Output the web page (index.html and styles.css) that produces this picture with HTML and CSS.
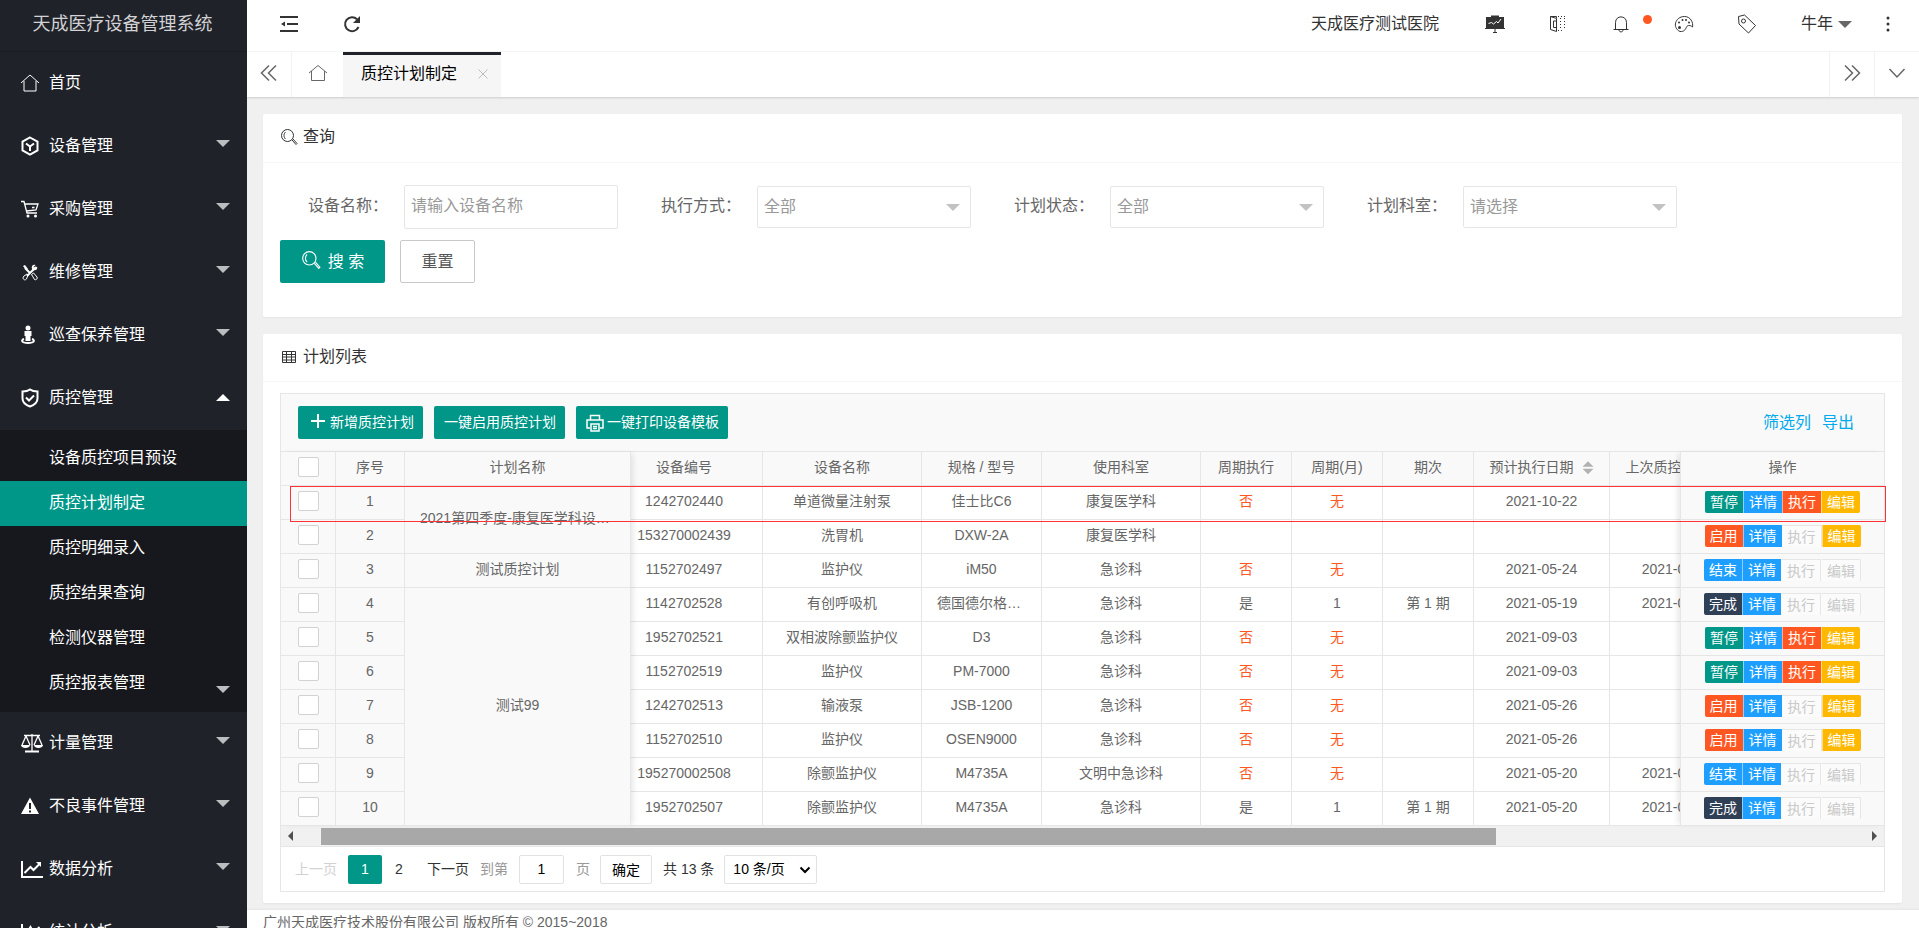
FILE: index.html
```html
<!DOCTYPE html>
<html lang="zh-CN">

<head>
    <meta charset="UTF-8">
    <meta name="viewport" content="width=device-width, initial-scale=1.0">
    <title>天成医疗设备管理系统</title>
    <link rel="stylesheet" href="styles.css">
</head>

<body>
    <div class="app">
        <!-- 左侧菜单 -->
        <aside class="side">
            <div class="logo">天成医疗设备管理系统</div>
            <ul class="menu">
                <li><a href="#"><svg class="menu-icon" viewBox="0 0 20 20"><path d="M1 10 10 2l9 8M4 8v10h12V8"/></svg>首页</a></li>
                <li><a href="#"><svg class="menu-icon bold" viewBox="0 0 20 20"><path d="M10 1.500l7.500 4.200v8.600L10 18.500l-7.500-4.200V5.700zM6 7.500l4 3 4-3M10 10.500V15"/></svg>设备管理<i class="arrow"></i></a></li>
                <li><a href="#"><svg class="menu-icon" viewBox="0 0 20 20"><path d="M1 2.500h3l3 11.500h10M5 5h13l-2 6-9.500 1M12 8.500h2.500" stroke-width="1.300"/><circle class="fill" cx="8" cy="17" r="1.500"/><circle class="fill" cx="15.500" cy="17" r="1.500"/></svg>采购管理<i class="arrow"></i></a></li>
                <li><a href="#"><svg class="menu-icon" viewBox="0 0 20 20"><path class="thick" d="M5 6l5 5M16 5l-9 9"/><path d="M11.500 12.500l2-1.500 3.500 4c1 1.500-1 3.500-2.500 2.500zM8 13l-1-1-3 2c-2.500 2 .5 5.500 2.500 3z"/><path class="fill" d="M3 4l2-1 3 4-2 1zM12 7c-1-3 1-5 3.500-4l-2 2 1.500 1.500 2-2C18 7 16 9 13 8z"/></svg>维修管理<i class="arrow"></i></a></li>
                <li><a href="#"><svg class="menu-icon" viewBox="0 0 20 20"><circle class="fill" cx="8" cy="3" r="2.500"/><path class="fill" d="M4.500 6h7v5h-1v5h-5v-5h-1z"/><path class="thick" d="M4 14c-3 1-3 4 4 4s7-3 4-4"/></svg>巡查保养管理<i class="arrow"></i></a></li>
                <li>
                    <a href="#"><svg class="menu-icon bold" viewBox="0 0 20 20"><path d="M10 1.500c2 1.500 4.500 2 7.500 2v7c0 4-3.500 6.500-7.500 8-4-1.500-7.500-4-7.500-8v-7c3 0 5.500-.5 7.500-2zM6 9.500l3 3 5-5"/></svg>质控管理<i class="arrow up"></i></a>
                    <ul class="submenu">
                        <li><a href="#">设备质控项目预设</a></li>
                        <li class="active"><a href="#">质控计划制定</a></li>
                        <li><a href="#">质控明细录入</a></li>
                        <li><a href="#">质控结果查询</a></li>
                        <li><a href="#">检测仪器管理</a></li>
                        <li><a href="#">质控报表管理<i class="arrow low"></i></a></li>
                    </ul>
                </li>
                <li><a href="#"><svg class="menu-icon wide" viewBox="0 0 24 20"><path d="M4 2.500h16M12 1v17M6 3l-4 9M6 3l4 9M18 3l-4 9M18 3l4 9" stroke-width="1.300"/><path class="thick" d="M5 18.500h14"/><path class="fill" d="M1 12h9c0 4-9 4-9 0zM14 12h9c0 4-9 4-9 0z"/></svg>计量管理<i class="arrow"></i></a></li>
                <li><a href="#"><svg class="menu-icon" viewBox="0 0 20 20"><path class="fill" d="M10 1.500 19 18H1z"/><path class="mark" d="M10 7v6M10 14.500v2"/></svg>不良事件管理<i class="arrow"></i></a></li>
                <li><a href="#"><svg class="menu-icon wide" viewBox="0 0 24 20"><path class="thick" d="M2 2v16h21M4.500 14l6-6 3 3 6-6"/><path class="fill" d="M16 3h5v5z"/></svg>数据分析<i class="arrow"></i></a></li>
                <li><a href="#"><svg class="menu-icon wide" viewBox="0 0 24 20"><path class="thick" d="M2 2v16h21M4.500 14l6-9 3 6 6-6"/></svg>统计分析<i class="arrow"></i></a></li>
            </ul>
        </aside>

        <div class="main">
            <header class="header">
                <a class="header-item" href="#"><svg width="18" height="18" viewBox="0 0 18 18"><path d="M0 2h18M7 9h11M0 16h18" stroke-width="2"/><path class="solid" d="M1 9l4-2.500v5z"/></svg></a>
                <a class="header-item" href="#"><svg width="18" height="18" viewBox="0 0 18 18"><path d="M15.500 12A7 7 0 1 1 14 4.200" stroke-width="2"/><path class="solid" d="M17 1v7h-7z"/></svg></a>
                <a class="header-item hospital" href="#">天成医疗测试医院</a>
                <a class="header-item" href="#"><svg width="20" height="20" viewBox="0 0 20 20"><path class="solid" d="M1 3h5V1.500h8V3h5v11H1zM0 14h20v1H0zM9.500 15h1v4h-1zM8 18h4v1H8z"/><path class="light" d="M3.500 9.500l3-1 2 1.500 3-2.500 1.500 1.500 3-4"/></svg></a>
                <a class="header-item" href="#"><svg width="18" height="18" viewBox="0 0 18 18"><path d="M1.500 1.500l6 2v13l-6-2zM7.500 3V1.500h-6M7.500 6h-3v6.500h3"/><path stroke-dasharray="1 2" d="M9 1.500h7M15.500 3v12M9 15.500h6M11.500 3v12"/></svg></a>
                <a class="header-item" href="#"><svg width="18" height="18" viewBox="0 0 18 18"><path d="M3.500 14V7.500c0-7.500 11-7.500 11 0V14M1.500 14.500h15M7 15c0 2.500 4 2.500 4 0"/></svg><span class="dot"></span></a>
                <a class="header-item" href="#"><svg width="20" height="18" viewBox="0 0 20 18"><path d="M6 16.500C-2 13 1 1.500 10.500 1.500c6 0 9 6 8 10.500-2-2-5-2-6 0s-2 5-6.500 4.500z"/><circle class="solid" cx="5.500" cy="12.500" r="1.500"/><circle class="solid" cx="5" cy="7.500" r="1"/><circle class="solid" cx="8.500" cy="5" r="1"/><circle class="solid" cx="12" cy="5" r="1"/><circle class="solid" cx="15" cy="7.500" r="1"/></svg></a>
                <a class="header-item" href="#"><svg width="20" height="20" viewBox="0 0 20 20"><path d="M1.500 2.500l6-1.500L18.500 11.500 11.500 19 2 10z"/><circle cx="6.500" cy="7" r="2"/></svg></a>
                <a class="header-item user" href="#">牛年<i class="caret"></i></a>
                <a class="header-item" href="#"><svg width="4" height="18" viewBox="0 0 4 18"><circle class="solid" cx="2" cy="3" r="1.500"/><circle class="solid" cx="2" cy="9" r="1.500"/><circle class="solid" cx="2" cy="15" r="1.500"/></svg></a>
            </header>

            <nav class="tabs">
                <a class="tab-btn" href="#"><svg width="18" height="18" viewBox="0 0 18 18"><path d="M9 1.500 1.500 9 9 16.500M16 1.500 8.500 9l7.500 7.500"/></svg></a>
                <a class="tab-home" href="#"><svg width="20" height="18" viewBox="0 0 20 18"><path d="M1 9 10 1.500 19 9M3.500 7v9.500h13V7"/></svg></a>
                <a class="tab" href="#">质控计划制定<svg width="12" height="12" viewBox="0 0 12 12"><path d="M1.500 1.500l9 9M10.500 1.500l-9 9"/></svg></a>
                <span class="space"></span>
                <a class="tab-btn" href="#"><svg width="18" height="18" viewBox="0 0 18 18"><path d="M2 1.500 9.500 9 2 16.500M9 1.500 16.500 9 9 16.500"/></svg></a>
                <a class="tab-btn" href="#"><svg width="18" height="18" viewBox="0 0 18 18"><path d="M1.500 5 9 13l7.500-8"/></svg></a>
            </nav>

            <main class="content">
                <!-- 查询 -->
                <section class="card">
                    <h2 class="card-header"><svg width="18" height="18" viewBox="0 0 18 18"><circle cx="7.500" cy="7.500" r="6"/><path d="M5.500 4c-2 2-2 5 0 7M12 12l4 4.500 1-1-4-4.500"/></svg>查询</h2>
                    <form class="search">
                        <div class="fields">
                            <div class="field"><label for="name">设备名称：</label><input class="input" type="text" id="name" placeholder="请输入设备名称"></div>
                            <div class="field"><label for="mode">执行方式：</label><span class="select"><select class="input" id="mode"><option>全部</option></select></span></div>
                            <div class="field"><label for="state">计划状态：</label><span class="select"><select class="input" id="state"><option>全部</option></select></span></div>
                            <div class="field"><label for="dept">计划科室：</label><span class="select"><select class="input" id="dept"><option>请选择</option></select></span></div>
                        </div>
                        <div class="actions">
                            <button class="btn btn-search" type="button"><svg width="20" height="20" viewBox="0 0 18 18"><circle cx="7.500" cy="7.500" r="6"/><path d="M5.500 4c-2 2-2 5 0 7M12 12l4 4.500 1-1-4-4.500"/></svg>搜 索</button>
                            <button class="btn btn-reset" type="reset">重置</button>
                        </div>
                    </form>
                </section>

                <!-- 计划列表 -->
                <section class="card">
                    <h2 class="card-header list"><svg width="18" height="18" viewBox="0 0 18 18"><path d="M2.500 3.500h13v11h-13zM2.500 6.500h13M2.500 9h13M2.500 12h13M6.500 3.500v11M11.500 3.500v11"/></svg>计划列表</h2>
                    <div class="table-view">
                        <div class="toolbar">
                            <button class="btn-sm add" type="button"><svg width="14" height="14" viewBox="0 0 14 14"><path d="M7 0v14M0 7h14" stroke-width="2"/></svg>新增质控计划</button>
                            <button class="btn-sm" type="button">一键启用质控计划</button>
                            <button class="btn-sm print" type="button"><svg width="18" height="18" viewBox="0 0 18 18"><path d="M4.500 6V1.500h9V6M4 14H1V6h16v8h-3M5 10h8v7H5zM7 12.500h4M7 14.500h4" stroke-width="1.500"/></svg>一键打印设备模板</button>
                            <span class="space"></span>
                            <a href="#">筛选列</a>
                            <a href="#">导出</a>
                        </div>

                        <div class="table-box">
                            <table class="fixed-left">
                                <colgroup><col class="w-check"><col class="w-no"><col class="w-plan"></colgroup>
                                <thead>
                                    <tr><th><input type="checkbox" aria-label="全选"></th><th>序号</th><th>计划名称</th></tr>
                                </thead>
                                <tbody>
                                    <tr><td><input type="checkbox" aria-label="选择1"></td><td>1</td><td rowspan="2">2021第四季度-康复医学科设备质控</td></tr>
                                    <tr><td><input type="checkbox" aria-label="选择2"></td><td>2</td></tr>
                                    <tr><td><input type="checkbox" aria-label="选择3"></td><td>3</td><td>测试质控计划</td></tr>
                                    <tr><td><input type="checkbox" aria-label="选择4"></td><td>4</td><td rowspan="7">测试99</td></tr>
                                    <tr><td><input type="checkbox" aria-label="选择5"></td><td>5</td></tr>
                                    <tr><td><input type="checkbox" aria-label="选择6"></td><td>6</td></tr>
                                    <tr><td><input type="checkbox" aria-label="选择7"></td><td>7</td></tr>
                                    <tr><td><input type="checkbox" aria-label="选择8"></td><td>8</td></tr>
                                    <tr><td><input type="checkbox" aria-label="选择9"></td><td>9</td></tr>
                                    <tr><td><input type="checkbox" aria-label="选择10"></td><td>10</td></tr>
                                </tbody>
                            </table>
                            <div class="table-scroll">
                                <table>
                                    <colgroup><col class="w-code"><col class="w-name"><col class="w-model"><col class="w-name"><col class="w-cycle"><col class="w-cycle"><col class="w-cycle"><col class="w-date"><col class="w-date"></colgroup>
                                    <thead>
                                        <tr><th>设备编号</th><th>设备名称</th><th>规格 / 型号</th><th>使用科室</th><th>周期执行</th><th>周期(月)</th><th>期次</th><th>预计执行日期<i class="sort"></i></th><th>上次质控日期<i class="sort"></i></th></tr>
                                    </thead>
                                    <tbody>
                                        <tr><td>1242702440</td><td>单道微量注射泵</td><td>佳士比C6</td><td>康复医学科</td><td class="red">否</td><td class="red">无</td><td></td><td>2021-10-22</td><td></td></tr>
                                        <tr><td>153270002439</td><td>洗胃机</td><td>DXW-2A</td><td>康复医学科</td><td></td><td></td><td></td><td></td><td></td></tr>
                                        <tr><td>1152702497</td><td>监护仪</td><td>iM50</td><td>急诊科</td><td class="red">否</td><td class="red">无</td><td></td><td>2021-05-24</td><td>2021-05-24</td></tr>
                                        <tr><td>1142702528</td><td>有创呼吸机</td><td>德国德尔格呼吸机</td><td>急诊科</td><td>是</td><td>1</td><td>第 1 期</td><td>2021-05-19</td><td>2021-05-19</td></tr>
                                        <tr><td>1952702521</td><td>双相波除颤监护仪</td><td>D3</td><td>急诊科</td><td class="red">否</td><td class="red">无</td><td></td><td>2021-09-03</td><td></td></tr>
                                        <tr><td>1152702519</td><td>监护仪</td><td>PM-7000</td><td>急诊科</td><td class="red">否</td><td class="red">无</td><td></td><td>2021-09-03</td><td></td></tr>
                                        <tr><td>1242702513</td><td>输液泵</td><td>JSB-1200</td><td>急诊科</td><td class="red">否</td><td class="red">无</td><td></td><td>2021-05-26</td><td></td></tr>
                                        <tr><td>1152702510</td><td>监护仪</td><td>OSEN9000</td><td>急诊科</td><td class="red">否</td><td class="red">无</td><td></td><td>2021-05-26</td><td></td></tr>
                                        <tr><td>195270002508</td><td>除颤监护仪</td><td>M4735A</td><td>文明中急诊科</td><td class="red">否</td><td class="red">无</td><td></td><td>2021-05-20</td><td>2021-05-20</td></tr>
                                        <tr><td>1952702507</td><td>除颤监护仪</td><td>M4735A</td><td>急诊科</td><td>是</td><td>1</td><td>第 1 期</td><td>2021-05-20</td><td>2021-05-20</td></tr>
                                    </tbody>
                                </table>
                            </div>
                            <table class="fixed-right">
                                <thead>
                                    <tr><th>操作</th></tr>
                                </thead>
                                <tbody>
                                    <tr><td><div class="group"><button class="green">暂停</button><button class="blue">详情</button><button class="orange">执行</button><button class="yellow">编辑</button></div></td></tr>
                                    <tr><td><div class="group"><button class="orange">启用</button><button class="blue">详情</button><button disabled>执行</button><button class="yellow">编辑</button></div></td></tr>
                                    <tr><td><div class="group"><button class="blue">结束</button><button class="blue">详情</button><button disabled>执行</button><button disabled>编辑</button></div></td></tr>
                                    <tr><td><div class="group"><button class="dark">完成</button><button class="blue">详情</button><button disabled>执行</button><button disabled>编辑</button></div></td></tr>
                                    <tr><td><div class="group"><button class="green">暂停</button><button class="blue">详情</button><button class="orange">执行</button><button class="yellow">编辑</button></div></td></tr>
                                    <tr><td><div class="group"><button class="green">暂停</button><button class="blue">详情</button><button class="orange">执行</button><button class="yellow">编辑</button></div></td></tr>
                                    <tr><td><div class="group"><button class="orange">启用</button><button class="blue">详情</button><button disabled>执行</button><button class="yellow">编辑</button></div></td></tr>
                                    <tr><td><div class="group"><button class="orange">启用</button><button class="blue">详情</button><button disabled>执行</button><button class="yellow">编辑</button></div></td></tr>
                                    <tr><td><div class="group"><button class="blue">结束</button><button class="blue">详情</button><button disabled>执行</button><button disabled>编辑</button></div></td></tr>
                                    <tr><td><div class="group"><button class="dark">完成</button><button class="blue">详情</button><button disabled>执行</button><button disabled>编辑</button></div></td></tr>
                                </tbody>
                            </table>
                            <div class="row-mark"></div>
                        </div>

                        <div class="scrollbar"><i class="to-left"></i><div class="track"><div class="thumb"></div></div><i class="to-right"></i></div>

                        <div class="page">
                            <a class="off" href="#">上一页</a>
                            <a class="current" href="#">1</a>
                            <a class="num" href="#">2</a>
                            <a class="next" href="#">下一页</a>
                            <label for="skip">到第</label>
                            <input type="text" id="skip" value="1">
                            <span class="unit">页</span>
                            <button type="button">确定</button>
                            <span class="count">共 13 条</span>
                            <span class="limit"><select aria-label="每页条数"><option>10 条/页</option></select><svg width="12" height="8" viewBox="0 0 12 8"><path d="M1.500 1.500 6 6l4.500-4.500"/></svg></span>
                        </div>
                    </div>
                </section>
            </main>

            <footer class="footer">广州天成医疗技术股份有限公司 版权所有 © 2015~2018</footer>
        </div>
    </div>
</body>

</html>
```

FILE: styles.css
```css
* {
    box-sizing: border-box;
    margin: 0;
    padding: 0;
}

body {
    font-family: "Liberation Sans", "Noto Sans CJK SC", sans-serif;
    font-size: 14px;
    line-height: 24px;
    color: #666;
    background-color: #f0f0f0;
    overflow: hidden;
}

a {
    color: inherit;
    text-decoration: none;
}

ul {
    list-style: none;
}

button,
input,
select {
    font-family: inherit;
    font-size: 14px;
}

svg {
    fill: none;
    stroke: currentColor;
    flex: none;
}

.solid {
    fill: currentColor;
    stroke: none;
}

.space {
    flex: 1;
}

.app {
    display: flex;
    height: 100vh;
    overflow: hidden;
}

/* 左侧菜单 */
.side {
    flex: none;
    width: 247px;
    overflow: hidden;
    background-color: #20222a;
    color: #fff;
    font-size: 16px;
}

.logo {
    height: 52px;
    line-height: 48px;
    text-align: center;
    font-size: 18px;
    padding-right: 2px;
    color: #d2d2d4;
    border-bottom: 1px solid #1a1c22;
}

.menu a {
    display: flex;
    align-items: center;
    height: 63px;
    padding: 0 17px 1px 49px;
}

.menu-icon {
    width: 20px;
    height: 20px;
    margin-left: -29px;
    margin-right: 9px;
}

.menu-icon.wide {
    width: 24px;
    margin-right: 5px;
}

.menu-icon.bold,
.menu-icon .thick {
    stroke-width: 2;
}

.menu-icon .fill {
    fill: #fff;
    stroke: none;
}

.menu-icon .mark {
    stroke: #20222a;
    stroke-width: 2;
}

.arrow {
    margin-left: auto;
    margin-bottom: 6px;
    border: 7px solid transparent;
    border-bottom-width: 0;
    border-top-color: #bcbdbf;
}

.arrow.up {
    margin-bottom: 2px;
    border-bottom: 7px solid #fff;
    border-top-width: 0;
}

.arrow.low {
    margin-bottom: -12px;
}

.menu .submenu {
    padding: 6px 0;
    background-color: #17181d;
}

.menu .submenu a {
    height: 45px;
}

.submenu .active {
    background-color: #009688;
}

/* 顶部 */
.main {
    flex: 1;
    min-width: 0;
    overflow: hidden;
}

.header {
    display: flex;
    height: 52px;
    padding-left: 10px;
    background-color: #fff;
    border-bottom: 1px solid #f6f6f6;
    color: #333;
    font-size: 16px;
}

.header-item {
    position: relative;
    display: flex;
    align-items: center;
    justify-content: center;
    width: 63px;
    height: 48px;
}

.header-item.hospital {
    width: auto;
    margin-left: auto;
    padding: 0 25px;
}

.header-item.user {
    width: auto;
    padding: 0 4px 0 22px;
}

.light {
    stroke: #fff;
}

.dot {
    position: absolute;
    top: 15px;
    right: 1px;
    width: 9px;
    height: 9px;
    border-radius: 50%;
    background-color: #ff5722;
}

.caret {
    margin-left: 5px;
    border: 7px solid transparent;
    border-bottom-width: 0;
    border-top-color: #666;
}

.tabs {
    display: flex;
    height: 45px;
    background-color: #fff;
    box-shadow: 0 1px 2px rgba(0, 0, 0, .15);
    position: relative;
    font-size: 16px;
}

.tab-btn,
.tab-home {
    display: flex;
    align-items: center;
    justify-content: center;
    width: 45px;
    padding-bottom: 3px;
    border-left: 1px solid #f2f2f2;
}

.tab-btn:first-child {
    width: 44px;
    border-left: none;
}

.tab-btn svg {
    stroke-width: 1.5px;
}

.tab-home {
    width: 52px;
}

.tab {
    display: flex;
    align-items: center;
    width: 158px;
    padding: 0 0 4px 18px;
    color: #000;
    background-color: #f6f6f6;
    border-top: 3px solid #20222a;
}

.tab svg {
    margin-left: 20px;
    color: #bbb;
}

/* 内容 */
.content {
    display: flex;
    flex-direction: column;
    gap: 17px;
    padding: 17px 17px 7px 16px;
}

.card {
    background-color: #fff;
    border-radius: 2px;
    box-shadow: 0 1px 2px rgba(0, 0, 0, .05);
}

.card-header {
    display: flex;
    align-items: center;
    height: 49px;
    padding-left: 17px;
    padding-bottom: 2px;
    font-size: 16px;
    font-weight: normal;
    color: #333;
    border-bottom: 1px solid #f6f6f6;
}

.card-header.list {
    height: 48px;
}

.card-header svg {
    margin-right: 5px;
}

.search {
    height: 154px;
    padding-top: 22px;
}

.fields {
    display: flex;
    gap: 29px;
    padding-left: 31px;
}

.field {
    display: flex;
    align-items: center;
    height: 44px;
    font-size: 16px;
}

.field label {
    width: 110px;
    padding: 0 16px 2px 14px;
    white-space: nowrap;
}

.input {
    display: block;
    width: 214px;
    height: 44px;
    padding: 0 6px 2px;
    font-size: 16px;
    color: #999;
    border: 1px solid #e6e6e6;
    border-radius: 2px;
    background-color: #fff;
    appearance: none;
}

.input::placeholder {
    color: #999;
}

.select {
    position: relative;
}

.select .input {
    height: 42px;
}

.select::after {
    content: "";
    position: absolute;
    top: 18px;
    right: 11px;
    border: 7px solid transparent;
    border-bottom-width: 0;
    border-top-color: #c2c2c2;
}

.actions {
    display: flex;
    gap: 15px;
    padding: 11px 17px;
}

.btn {
    display: flex;
    align-items: center;
    justify-content: center;
    height: 43px;
    padding-bottom: 3px;
    font-size: 16px;
    border: none;
    border-radius: 2px;
}

.btn-search {
    width: 105px;
    gap: 7px;
    color: #fff;
    background-color: #009688;
}

.btn-reset {
    width: 75px;
    color: #555;
    background-color: #fff;
    border: 1px solid #c9c9c9;
}

/* 表格 */
.card .table-view {
    border: 1px solid #e6e6e6;
    margin: 11px 17px 0;
}

.card:last-child {
    padding-bottom: 11px;
}

.toolbar {
    display: flex;
    align-items: center;
    height: 58px;
    padding: 0 30px 0 17px;
    background-color: #f9f9f9;
    border-bottom: 1px solid #e6e6e6;
}

.toolbar a {
    margin-left: 11px;
    font-size: 16px;
    color: #01aaed;
}

.btn-sm {
    display: flex;
    align-items: center;
    height: 33px;
    padding: 0 9px 3px 10px;
    margin-right: 11px;
    color: #fff;
    background-color: #009688;
    border: none;
    border-radius: 2px;
}

.btn-sm.add {
    padding-left: 13px;
}

.btn-sm svg {
    margin-right: 5px;
}

.btn-sm.print svg {
    margin-right: 3px;
    margin-bottom: -3px;
}

.table-box {
    display: flex;
    position: relative;
}

table {
    table-layout: fixed;
    border-spacing: 0;
}

th,
td {
    height: 34px;
    padding: 0 15px 4px;
    line-height: 24px;
    font-weight: normal;
    text-align: center;
    white-space: nowrap;
    overflow: hidden;
    text-overflow: ellipsis;
    border-right: 1px solid #e6e6e6;
    border-bottom: 1px solid #e6e6e6;
    background-color: #fff;
}

th,
.fixed-left td,
.fixed-right td {
    background-color: #f9f9f9;
}

.fixed-left {
    flex: none;
    width: 350px;
    box-shadow: 4px 0 6px -2px rgba(0, 0, 0, .1);
    z-index: 1;
}

.table-scroll {
    flex: 1;
    min-width: 0;
    overflow: hidden;
}

.table-scroll table {
    width: 1140px;
    margin-left: -25px;
}

.fixed-right {
    flex: none;
    width: 204px;
    border-left: 1px solid #e6e6e6;
    box-shadow: -4px 0 6px -2px rgba(0, 0, 0, .1);
    z-index: 1;
}

.fixed-right th,
.fixed-right td {
    border-right: none;
}

.fixed-right td {
    padding-bottom: 1px;
}

.w-check { width: 55px; }
.w-no { width: 69px; }
.w-plan { width: 226px; }
.w-code { width: 157px; }
.w-name { width: 159px; }
.w-model { width: 120px; }
.w-cycle { width: 91px; }
.w-date { width: 136px; }

input[type="checkbox"] {
    display: block;
    width: 21px;
    height: 20px;
    margin-left: 2px;
    appearance: none;
    border: 1px solid #d2d2d2;
    border-radius: 2px;
    background-color: #fff;
}

.red {
    color: #ff5722;
}

.sort {
    display: inline-block;
    width: 11px;
    height: 13px;
    margin-left: 9px;
    vertical-align: middle;
    background-color: #b2b2b2;
    clip-path: polygon(50% 0, 100% 42%, 0 42%, 0 58%, 100% 58%, 50% 100%, 0 58%, 0 42%);
}

.group {
    display: flex;
    justify-content: center;
    margin: 0 -10px;
}

.group button {
    height: 22px;
    line-height: 20px;
    padding: 0 5px;
    color: #fff;
    border: none;
    border-left: 1px solid rgba(255, 255, 255, .5);
}

.group button:first-child {
    border-left: none;
    border-radius: 2px 0 0 2px;
}

.group button:last-child {
    border-radius: 0 2px 2px 0;
}

.group button:disabled {
    color: #c9c9c9;
    background-color: #fbfbfb;
    border: 1px solid #e6e6e6;
    border-left-color: #fbfbfb;
    border-bottom: none;
}

.green { background-color: #009688; }
.blue { background-color: #1e9fff; }
.orange { background-color: #ff5722; }
.yellow { background-color: #ffb800; }
.dark { background-color: #2f4056; }

/* 当前行标记 */
.row-mark {
    position: absolute;
    top: 34px;
    left: 9px;
    right: -2px;
    height: 36px;
    border: 1px solid #f33;
    z-index: 2;
    pointer-events: none;
}

.scrollbar {
    display: flex;
    align-items: center;
    height: 21px;
    padding: 0 7px;
    background-color: #f1f1f1;
    border-bottom: 1px solid #e6e6e6;
}

.track {
    flex: 1;
    padding: 0 25px 0 28px;
}

.thumb {
    width: 77%;
    height: 17px;
    background-color: #a8a8a8;
}

.to-left,
.to-right {
    border: 5px solid transparent;
}

.to-left {
    border-left-width: 0;
    border-right-color: #505050;
}

.to-right {
    border-right-width: 0;
    border-left-color: #505050;
}

/* 分页 */
.page {
    display: flex;
    align-items: center;
    height: 44px;
    padding-left: 14px;
    color: #333;
}

.page .off {
    color: #d2d2d2;
}

.page .current,
.page .num {
    width: 34px;
    height: 29px;
    line-height: 29px;
    text-align: center;
}

.page .current {
    margin-left: 11px;
    color: #fff;
    background-color: #009688;
    border-radius: 2px;
}

.page .next {
    margin: 0 11px;
}

.page label,
.page .unit {
    color: #999;
}

.page input,
.page button,
.page select {
    height: 29px;
    color: #000;
    background-color: #fff;
    border: 1px solid #e2e2e2;
    border-radius: 2px;
}

.page input {
    width: 45px;
    margin: 0 12px 0 11px;
    text-align: center;
}

.page button {
    width: 52px;
    margin: 0 11px 0 10px;
}

.limit {
    position: relative;
    margin-left: 10px;
}

.page select {
    display: block;
    width: 93px;
    padding: 0 8px;
    appearance: none;
}

.limit svg {
    position: absolute;
    top: 11px;
    right: 6px;
    color: #000;
    stroke-width: 2px;
}

.footer {
    height: 44px;
    padding: 0 16px;
    line-height: 24px;
    background-color: #fff;
    box-shadow: 0 -1px 2px rgba(0, 0, 0, .05);
}
```
